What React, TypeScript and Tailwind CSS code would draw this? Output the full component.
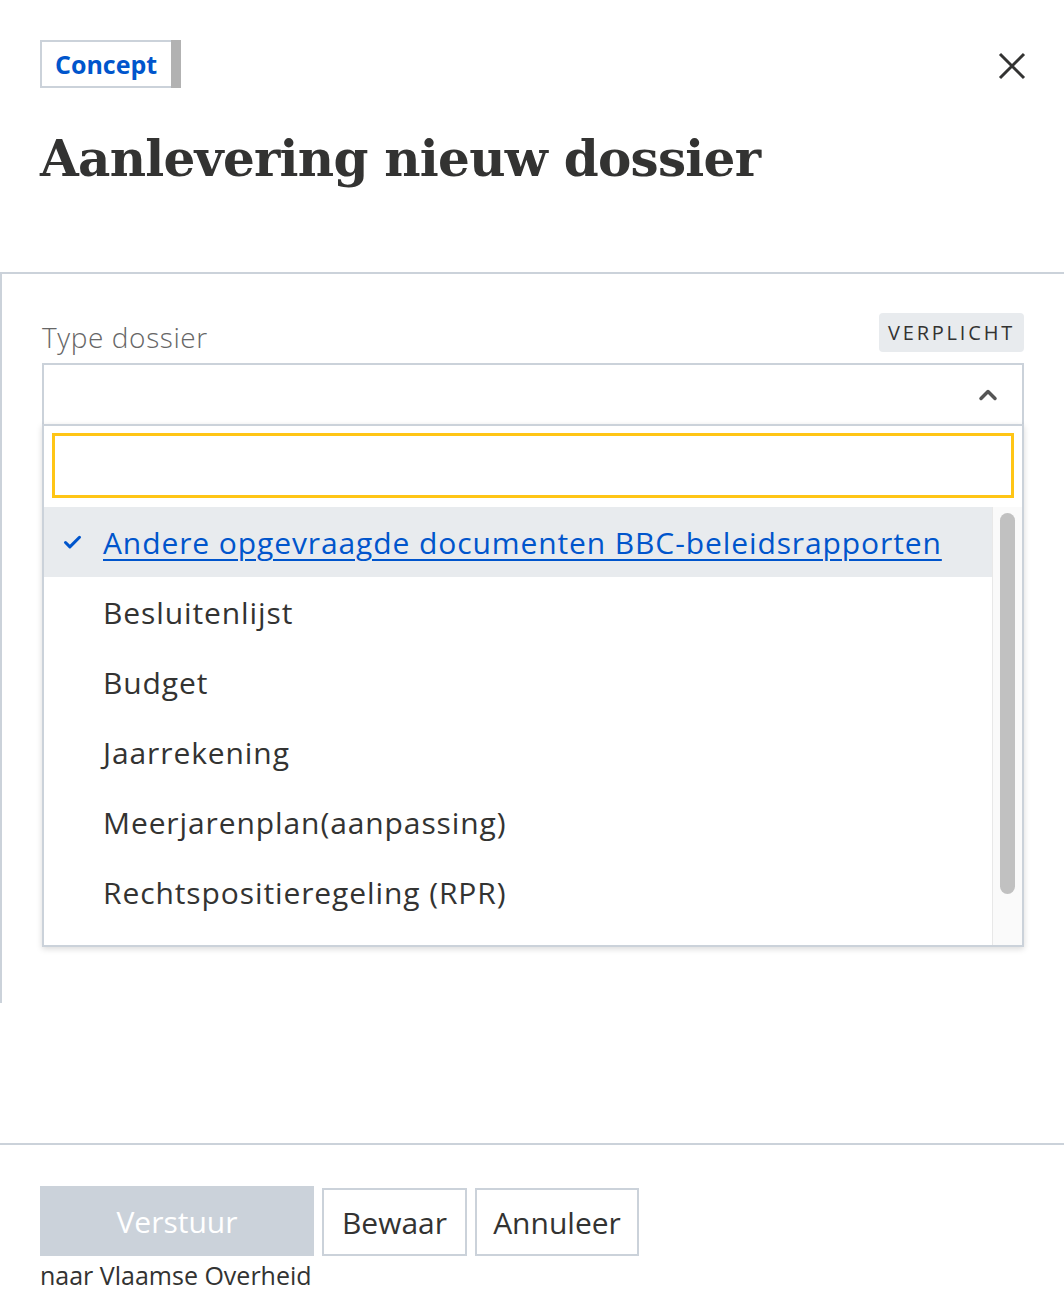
import { ChevronUp, Check } from 'lucide-react'

const options = [
  'Andere opgevraagde documenten BBC-beleidsrapporten',
  'Besluitenlijst',
  'Budget',
  'Jaarrekening',
  'Meerjarenplan(aanpassing)',
  'Rechtspositieregeling (RPR)',
]

export default function App() {
  return (
    <div className="w-[1064px] h-[1314px] bg-white text-[#333332] font-['Open_Sans',sans-serif] flex flex-col">
      {/* header */}
      <header className="px-[40px] pt-[40px]">
        <div className="flex items-start justify-between">
          <span className="inline-flex h-[48px] items-stretch">
            <span className="flex items-center border-2 border-r-0 border-[#cbd2da] pl-[13px] pr-[14px] text-[25px] font-bold text-[#0055cc] leading-none">
              Concept
            </span>
            <span className="w-[10px] bg-[#b2b2b2]" />
          </span>
          <button aria-label="Sluiten" className="mt-[12px] mr-[-2px] w-[28px] h-[28px] flex items-center justify-center text-[#333332]">
            <svg viewBox="0 0 28 28" className="w-[28px] h-[28px]" fill="none" stroke="currentColor" strokeWidth="3" strokeLinecap="butt">
              <path d="M2 2 26 26M26 2 2 26" />
            </svg>
          </button>
        </div>
        <h1 className="mt-[41px] font-['DejaVu_Serif',serif] font-bold text-[50px] leading-[60px] tracking-[-0.75px] text-[#333332]">
          Aanlevering nieuw dossier
        </h1>
      </header>

      {/* body */}
      <section className="mt-[83px] h-[731px] border-t-2 border-l-2 border-[#cbd2da] pl-[40px] pr-[40px] pt-[39px]">
        <div className="flex items-end justify-between">
          <label className="text-[28px] font-light tracking-[0.6px] text-[#666666] leading-none pb-[1px]">Type dossier</label>
          <span className="h-[39px] px-[9px] rounded-[4px] bg-[#e8ebee] flex items-center text-[20px] tracking-[2.8px] text-[#333332]">
            VERPLICHT
          </span>
        </div>
        <div className="relative mt-[11px]">
          <div className="h-[63px] border-2 border-[#cbd2da] flex items-center justify-end pr-[20px]">
            <ChevronUp className="w-[28px] h-[28px] text-[#555]" strokeWidth={3} />
          </div>
          {/* dropdown */}
          <div className="absolute left-0 right-0 top-[61px] h-[523px] bg-white border-2 border-[#cbd2da] shadow-[0_2px_6px_rgba(0,0,0,0.15)] flex flex-col">
            <div className="px-[8px] pt-[7px] pb-[9px]">
              <div className="h-[65px] border-[3px] border-[#ffc515] bg-white" />
            </div>
            <div className="flex flex-1 min-h-0">
              <ul className="flex-1">
                {options.map((o, i) => (
                  <li
                    key={o}
                    className={`h-[70px] flex items-center text-[30px] tracking-[0.9px] ${i === 0 ? 'bg-[#e8ebee]' : ''}`}
                  >
                    <span className="w-[59px] flex justify-end pr-[20px]">
                      {i === 0 && <Check className="w-[21px] h-[21px] text-[#0055cc]" strokeWidth={3.5} />}
                    </span>
                    <span className={i === 0 ? 'text-[#0055cc] underline underline-offset-[5px] decoration-2' : ''}>{o}</span>
                  </li>
                ))}
              </ul>
              <div className="w-[30px] bg-[#fafafa] border-l border-[#e8e8e8] pt-[6px] px-[7px]">
                <div className="h-[381px] rounded-full bg-[#c1c1c1]" />
              </div>
            </div>
          </div>
        </div>
      </section>

      {/* footer */}
      <footer className="mt-[140px] border-t-2 border-[#cbd2da] px-[40px] pt-[41px]">
        <div className="flex items-start gap-[8px]">
          <div className="w-[274px] flex flex-col">
            <button className="w-[274px] h-[70px] bg-[#cbd2da] text-white text-[30px]">Verstuur</button>
            <span className="mt-[2px] whitespace-nowrap text-[25px] leading-[34px]">naar Vlaamse Overheid</span>
          </div>
          <button className="h-[68px] w-[145px] border-2 border-[#cbd2da] text-[30px] mt-[2px]">Bewaar</button>
          <button className="h-[68px] w-[164px] border-2 border-[#cbd2da] text-[30px] mt-[2px]">Annuleer</button>
        </div>
      </footer>
    </div>
  )
}
